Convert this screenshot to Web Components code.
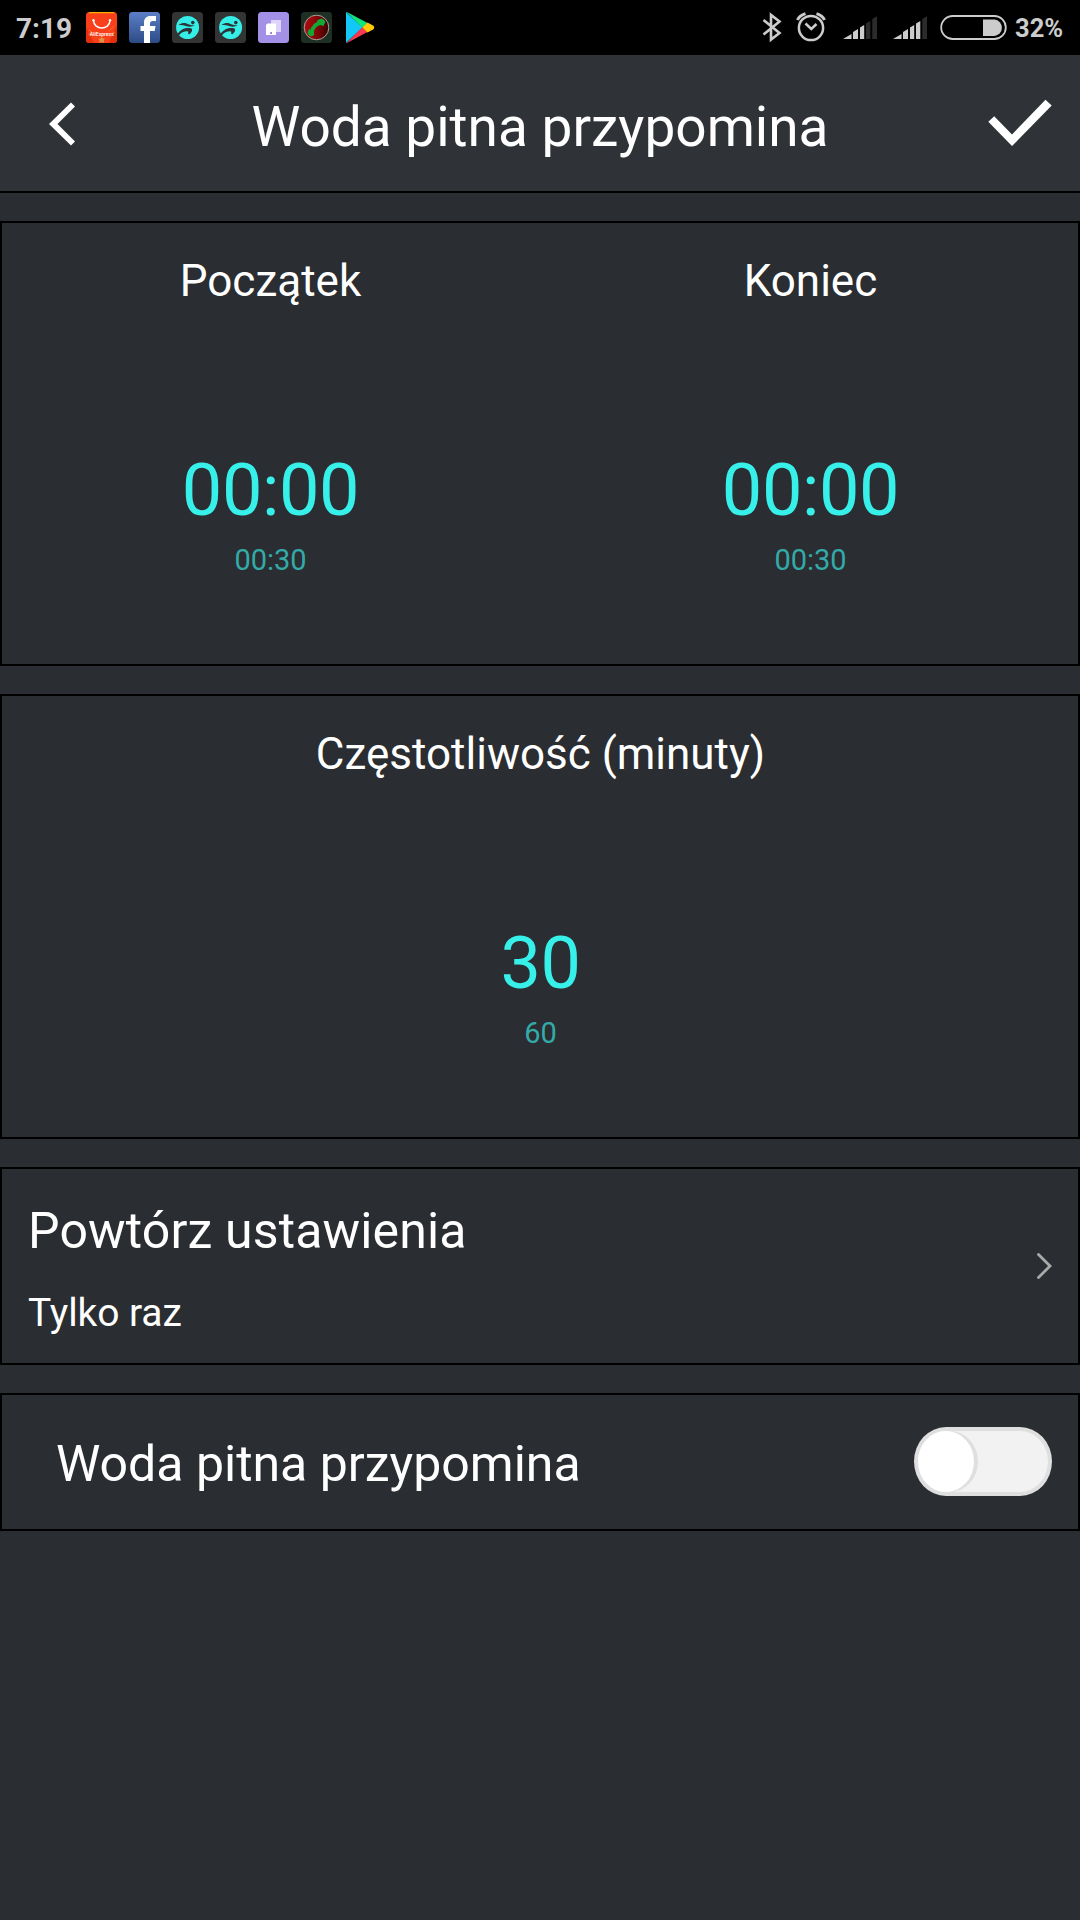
<!DOCTYPE html>
<html lang="pl">
<head>
<meta charset="UTF-8">
<title>Woda pitna przypomina</title>
<style>
    html, body {
        margin: 0;
        height: 100%;
        background: #2a2d31;
    }

    body {
        font-family: Roboto, "Liberation Sans", sans-serif;
        color: #fff;
        --accent: #38f0ea;
        --accent-dim: #34aaa8;
        --line: #000;
    }
</style>
</head>
<body>
<reminder-screen>
    <status-bar slot="status" time="7:19" battery="32%"></status-bar>
    <title-bar slot="title">Woda pitna przypomina</title-bar>

    <settings-card>
        <value-picker value="00:00" next="00:30">Początek</value-picker>
        <value-picker value="00:00" next="00:30">Koniec</value-picker>
    </settings-card>

    <settings-card>
        <value-picker value="30" next="60">Częstotliwość (minuty)</value-picker>
    </settings-card>

    <settings-card>
        <link-row>
            Powtórz ustawienia
            <span slot="detail">Tylko raz</span>
        </link-row>
    </settings-card>

    <settings-card>
        <switch-row>Woda pitna przypomina</switch-row>
    </settings-card>
</reminder-screen>

<script>
// Page frame: status bar, title bar, then a column of cards
class ReminderScreen extends HTMLElement {
    constructor() {
        super();
        this.attachShadow({ mode: 'open' });
        this.shadowRoot.innerHTML = `
            <style>
                :host {
                    display: flex;
                    flex-direction: column;
                    width: 1080px;
                    height: 1920px;
                    overflow: hidden;
                }

                main {
                    display: flex;
                    flex-direction: column;
                    gap: 28px;
                    padding-top: 28px;
                }
            </style>
            <slot name="status"></slot>
            <slot name="title"></slot>
            <main><slot></slot></main>
        `;
    }
}

// Small square icons of the notifications
const APP_ICONS = {
    aliexpress: `
        <rect width="31" height="31" rx="3.5" fill="#f9401a"/>
        <path d="M2 1.2Q3 0 5 0H26Q28 0 29 1.2Z" fill="#ffae00"/>
        <path d="M0 15L8 31H3.500Q0 31 0 27.500ZM31 13L23 31H27.500Q31 31 31 27.500Z" fill="#e2300c"/>
        <path d="M3 18l4 3M2 22l6 1M28 14l-5 5M29 20l-5 2" stroke="#ff6a26" fill="none"/>
        <path d="M7.500 8.500C8 18.500 23.500 18.500 24 8.500" fill="none" stroke="#fff" stroke-width="1.500"/>
        <circle cx="7.500" cy="8.300" r="1.200" fill="#fff"/><circle cx="24" cy="8.300" r="1.200" fill="#fff"/>
        <text x="15.800" y="23.800" text-anchor="middle" font-size="6" font-weight="500" textLength="24" lengthAdjust="spacingAndGlyphs" fill="#fff">AliExpress</text>
        <path d="M13.500 31v-3l-1-1.500h2l1.200-1.500 1.200 1.500h2l-1 1.500v3l-2.200-1.200z" fill="#d99a4a"/>`,
    facebook: `
        <defs><linearGradient id="fb" x2="0" y2="1"><stop stop-color="#5b80c8"/><stop offset="1" stop-color="#2d4a86"/></linearGradient></defs>
        <rect width="31" height="31" rx="3.500" fill="url(#fb)"/>
        <path d="M15 31V19h-3.500v-5H15v-3.500C15 6.500 17.500 4 21.500 4H27v5h-3.500Q21 9 21 11.500V14h5.500l-.8 5H21v12z" fill="#fff"/>`,
    runner: `
        <rect width="31" height="31" rx="3.500" fill="#333434"/>
        <circle cx="15.600" cy="15.500" r="11.500" fill="#35eee8"/>
        <circle cx="20.800" cy="10.600" r="1.800" fill="#2c3435"/>
        <path d="M6.500 13C11 9.800 14 11 17 12.500Q20 13.700 23 13.600Q18 15.600 14 14Q10.500 12.500 6.500 13Z" fill="#2c3435"/>
        <path d="M4.500 23.500C8 17.500 13 15 19.500 16.500Q21.500 18.500 17.500 22.300L15.800 21.500Q17.500 19 14.500 19.200C10.500 19.500 8.500 21 5.800 25Z" fill="#2c3435"/>`,
    copies: `
        <rect width="31" height="31" rx="3.500" fill="#a391e8"/>
        <rect x="13" y="8" width="10" height="12" fill="#ddd3fb"/>
        <path d="M8 13l1.500-1.500H18V23H8z" fill="#fff"/>
        <path d="M12.500 20h1.500v2h-2z" fill="#8e7bd6"/>`,
    phone: `
        <defs><linearGradient id="ph"><stop stop-color="#b00d10"/><stop offset=".5" stop-color="#850608"/><stop offset="1" stop-color="#330002"/></linearGradient></defs>
        <rect width="31" height="31" rx="3.500" fill="#1e3024"/>
        <circle cx="15.500" cy="15.500" r="12.300" fill="url(#ph)" stroke="#aaa2a0"/>
        <path d="M10.500 21C11.500 14.500 14.500 11.500 21 10.500" fill="none" stroke="#12a834" stroke-width="3.800"/>
        <path d="M16 8.500L20 6.500Q23.500 7 24.500 10L22.500 14L17.500 12.500ZM8 17L12.800 19L13.200 23L10 24.500Q7 23.500 6.500 20.500Z" fill="#12a834"/>`
};

function appIcon(name) {
    return `<svg width="31" height="31" viewBox="0 0 31 31">${APP_ICONS[name]}</svg>`;
}

// Five rising bars; bars from `level` on are dimmed
function signalIcon(level) {
    const bars = [
        'M0 27L8.500 22V27Z',
        'M10 27V20L15 17V27Z',
        'M17 27V15.500L21.200 13V27Z',
        'M23 27V11.500L27.300 9V27Z',
        'M29.300 27V7L34 4.200V27Z'
    ];
    return `<svg width="34" height="31" viewBox="0 0 34 31">${bars.map((d, i) =>
        `<path d="${d}" fill="${i < level ? '#ccc' : '#2b2b2b'}"/>`).join('')}</svg>`;
}

class StatusBar extends HTMLElement {
    constructor() {
        super();
        this.attachShadow({ mode: 'open' });
        this.shadowRoot.innerHTML = `
            <style>
                :host {
                    display: flex;
                    justify-content: space-between;
                    align-items: center;
                    box-sizing: border-box;
                    height: 55px;
                    padding: 0 16px;
                    background: #000;
                    color: #ccc;
                    font-weight: 700;
                }

                svg { display: block; }

                .group {
                    display: flex;
                    align-items: center;
                }

                .apps { gap: 12px; }

                .time {
                    width: 58px;
                    padding-top: 2px;
                    font-size: 28px;
                    line-height: 33px;
                    white-space: nowrap;
                }

                .signals {
                    display: flex;
                    gap: 16px;
                    margin: 0 13px 0 17px;
                }

                .alarm { margin-left: 14px; }

                .percent {
                    width: 49px;
                    margin-left: 8px;
                    padding-top: 2px;
                    font-size: 25.5px;
                    line-height: 31px;
                    white-space: nowrap;
                }
            </style>
            <div class="group apps">
                <span class="time">${this.getAttribute('time')}</span>
                ${appIcon('aliexpress')}
                ${appIcon('facebook')}
                ${appIcon('runner')}
                ${appIcon('runner')}
                ${appIcon('copies')}
                ${appIcon('phone')}
                <svg width="31" height="33" viewBox="0 0 31 33">
                    <path d="M2 1L2 32L18.500 16.500Z" fill="#12c8f8"/>
                    <path d="M2 0.500L23.500 12L18.500 17Z" fill="#10e67c"/>
                    <path d="M2 32.500L23.500 21L18.500 16Z" fill="#f83a50"/>
                    <path d="M23.500 11.500L29 14.500Q31.500 16.500 29 18.500L23.500 21.500L18.500 16.500Z" fill="#ffca05"/>
                </svg>
            </div>
            <div class="group">
                <svg width="20" height="31" viewBox="0 0 20 31">
                    <path d="M1.500 8L17.500 21L9 27.500V3L17.500 9.500L1.500 22.500" fill="none" stroke="#ccc" stroke-width="2.600"/>
                </svg>
                <svg class="alarm" width="30" height="31" viewBox="0 0 30 31">
                    <g fill="none" stroke="#ccc" stroke-width="2.500">
                        <circle cx="15" cy="16" r="12.100"/>
                        <path d="M9.500 11.500L15.300 17L20.500 12" stroke-width="2.500"/>
                        <path d="M1.500 8Q3.500 3.500 9.500 1.600M28.500 8Q26.500 3.500 20.500 1.600" stroke-width="3"/>
                    </g>
                </svg>
                <div class="signals">${signalIcon(3)}${signalIcon(4)}</div>
                <svg width="67" height="31" viewBox="0 0 67 31">
                    <rect x="1.200" y="4" width="64.600" height="23" rx="11.500" fill="none" stroke="#ccc" stroke-width="1.800"/>
                    <path d="M43 7.500H54.500A8.300 8.300 0 0 1 54.500 24H43Z" fill="#ccc"/>
                </svg>
                <span class="percent">${this.getAttribute('battery')}</span>
            </div>
        `;
    }
}

class TitleBar extends HTMLElement {
    constructor() {
        super();
        this.attachShadow({ mode: 'open' });
        this.shadowRoot.innerHTML = `
            <style>
                :host {
                    display: flex;
                    align-items: center;
                    justify-content: space-between;
                    box-sizing: border-box;
                    height: 138px;
                    padding: 0 28px 0 48px;
                    border-bottom: 2px solid var(--line);
                    background: #2f3237;
                }

                .back {
                    display: flex;
                    width: 44px;
                }

                .done {
                    display: flex;
                    width: 64px;
                }

                h1 {
                    margin: 8px 0 0;
                    font-size: 55px;
                    font-weight: 400;
                    line-height: 66px;
                    white-space: nowrap;
                }
            </style>
            <div class="back">
                <svg width="28" height="46" viewBox="48 100 28 46">
                    <path d="M71 102.500L75 106.500L57.500 124L75 141.500L71 145.500L49 124Z" fill="#fff"/>
                </svg>
            </div>
            <h1><slot></slot></h1>
            <div class="done">
                <svg width="64" height="48" viewBox="988 99 64 48">
                    <path d="M988.300 121.800L994.200 116.300L1012 134.500L1045.500 99.700L1051.700 105.500L1012 146Z" fill="#fff"/>
                </svg>
            </div>
        `;
    }
}

class SettingsCard extends HTMLElement {
    constructor() {
        super();
        this.attachShadow({ mode: 'open' });
        this.shadowRoot.innerHTML = `
            <style>
                :host {
                    display: flex;
                    border: 2px solid var(--line);
                }

                ::slotted(*) { flex: 1 1 0; }

                /* Pickers split the full card width, borders included */
                ::slotted(value-picker:first-child) { margin-left: -2px; }
                ::slotted(value-picker:last-child) { margin-right: -2px; }
            </style>
            <slot></slot>
        `;
    }
}

// Wheel that shows the chosen value and the one that follows it
class ValuePicker extends HTMLElement {
    constructor() {
        super();
        this.attachShadow({ mode: 'open' });
        this.shadowRoot.innerHTML = `
            <style>
                :host {
                    display: flex;
                    flex-direction: column;
                    align-items: center;
                    box-sizing: border-box;
                    height: 441px;
                    padding: 32px 0 0 1px;
                }

                .label {
                    font-size: 44px;
                    line-height: 53px;
                }

                .wheel {
                    display: flex;
                    flex-direction: column;
                    align-items: center;
                    margin-top: 141px;
                }

                .current {
                    color: var(--accent);
                    font-size: 72px;
                    letter-spacing: -0.4px;
                    line-height: 84px;
                }

                .next {
                    margin-top: 9px;
                    color: var(--accent-dim);
                    font-size: 29px;
                    line-height: 36px;
                }
            </style>
            <div class="label"><slot></slot></div>
            <div class="wheel">
                <div class="current">${this.getAttribute('value')}</div>
                <div class="next">${this.getAttribute('next')}</div>
            </div>
        `;
    }
}

class LinkRow extends HTMLElement {
    constructor() {
        super();
        this.attachShadow({ mode: 'open' });
        this.shadowRoot.innerHTML = `
            <style>
                :host {
                    display: flex;
                    align-items: center;
                    justify-content: space-between;
                    box-sizing: border-box;
                    height: 194px;
                    padding: 0 26px;
                }

                .text {
                    display: flex;
                    flex-direction: column;
                    gap: 29px;
                    padding-top: 5px;
                }

                .name {
                    font-size: 50px;
                    letter-spacing: 0.15px;
                    line-height: 60px;
                }

                .detail {
                    font-size: 39px;
                    letter-spacing: -0.1px;
                    line-height: 46px;
                }
            </style>
            <div class="text">
                <div class="name"><slot></slot></div>
                <div class="detail"><slot name="detail"></slot></div>
            </div>
            <svg width="16" height="28" viewBox="0 0 16 28">
                <path d="M2.500 2.500L14 14L2.500 25.500" fill="none" stroke="#aaa" stroke-width="2.800" stroke-linecap="round"/>
            </svg>
        `;
    }
}

class SwitchRow extends HTMLElement {
    constructor() {
        super();
        this.attachShadow({ mode: 'open' });
        this.shadowRoot.innerHTML = `
            <style>
                :host {
                    display: flex;
                    align-items: center;
                    justify-content: space-between;
                    box-sizing: border-box;
                    height: 134px;
                    padding: 0 26px 0 54px;
                }

                .name {
                    padding-top: 3px;
                    font-size: 50px;
                    line-height: 60px;
                }

                .track {
                    display: flex;
                    box-sizing: border-box;
                    width: 138px;
                    height: 69px;
                    margin-bottom: 1px;
                    border: 4px solid #dfdfdf;
                    border-radius: 32px / 34.5px;
                    background: #f2f2f2;
                }

                .knob {
                    width: 56px;
                    height: 61px;
                    border-radius: 50%;
                    background: #fff;
                    box-shadow: 4px 0 0 #dfdfdf;
                }
            </style>
            <div class="name"><slot></slot></div>
            <div class="track" role="switch" aria-checked="false">
                <div class="knob"></div>
            </div>
        `;
        this.shadowRoot.querySelector('.track').addEventListener('click', (e) => this.toggle(e.currentTarget));
    }

    toggle(track) {
        const on = track.getAttribute('aria-checked') !== 'true';
        track.setAttribute('aria-checked', String(on));
        track.style.justifyContent = on ? 'flex-end' : 'flex-start';
    }
}

customElements.define('reminder-screen', ReminderScreen);
customElements.define('status-bar', StatusBar);
customElements.define('title-bar', TitleBar);
customElements.define('settings-card', SettingsCard);
customElements.define('value-picker', ValuePicker);
customElements.define('link-row', LinkRow);
customElements.define('switch-row', SwitchRow);
</script>
</body>
</html>
